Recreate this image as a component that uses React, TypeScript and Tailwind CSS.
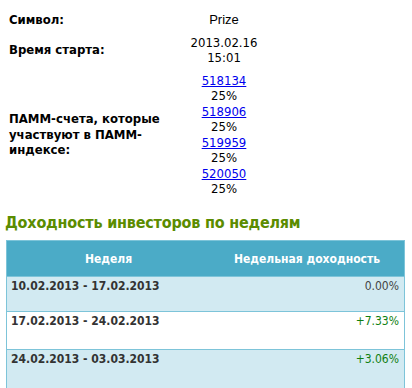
import React from "react";

const font = { fontFamily: "Tahoma, 'DejaVu Sans Condensed', 'DejaVu Sans', sans-serif" };

const accounts = ["518134", "518906", "519959", "520050"];

const weeks = [
  { w: "10.02.2013 - 17.02.2013", v: "0.00%", c: "text-[#444444]", bg: "bg-[#d2eaf2]", h: "h-[35px]" },
  { w: "17.02.2013 - 24.02.2013", v: "+7.33%", c: "text-[#108010]", bg: "bg-white", h: "h-[38px]" },
  { w: "24.02.2013 - 03.03.2013", v: "+3.06%", c: "text-[#108010]", bg: "bg-[#d2eaf2]", h: "h-[40px]" },
];

export default function App() {
  return (
    <div className="w-[412px] h-[388px] overflow-hidden bg-white text-[13px] text-black" style={font}>
      <div className="pt-[9px] pl-[6px] flex flex-col gap-[1px] leading-[15.5px]">
        <div className="grid grid-cols-[170px_96px] py-[3px]">
          <div className="font-bold pl-[3px] flex items-center">Символ:</div>
          <div className="text-center" style={{ fontFamily: "'Liberation Sans', Arial, sans-serif" }}>Prize</div>
        </div>
        <div className="grid grid-cols-[170px_96px] py-[3px]">
          <div className="font-bold pl-[3px] flex items-center">Время старта:</div>
          <div className="text-center">
            <div>2013.02.16</div>
            <div>15:01</div>
          </div>
        </div>
        <div className="grid grid-cols-[170px_96px] py-[3px]">
          <div className="font-bold pl-[3px] flex items-center">ПАММ-счета, которые участвуют в ПАММ-индексе:</div>
          <div className="text-center">
            {accounts.map((a) => (
              <div key={a}>
                <div>
                  <a href="#" className="text-[#0000ee] underline">{a}</a>
                </div>
                <div>25%</div>
              </div>
            ))}
          </div>
        </div>
      </div>
      <div className="pl-[5px] mt-[13px] text-[16px] leading-[20px] font-bold tracking-[-0.2px] text-[#5b8c00]">
        Доходность инвесторов по неделям
      </div>
      <div className="mt-[7px] ml-[6px] w-[399px] border-x border-t border-[#7dc4d9] text-[12px] leading-[15px]">
        <div className="grid grid-cols-[203px_1fr] h-[36px] bg-[#4babc7] text-white font-bold items-center border-b border-[#7dc4d9] pt-[3px]">
          <div className="text-center">Неделя</div>
          <div className="text-center">Недельная доходность</div>
        </div>
        {weeks.map((r) => (
          <div key={r.w} className={`grid grid-cols-[203px_1fr] ${r.h} ${r.bg} border-b border-[#7dc4d9] items-start pt-[2px]`}>
            <div className="pl-[4px] font-bold text-[#333333]">{r.w}</div>
            <div className={`text-right pr-[5px] ${r.c}`}>{r.v}</div>
          </div>
        ))}
      </div>
    </div>
  );
}
